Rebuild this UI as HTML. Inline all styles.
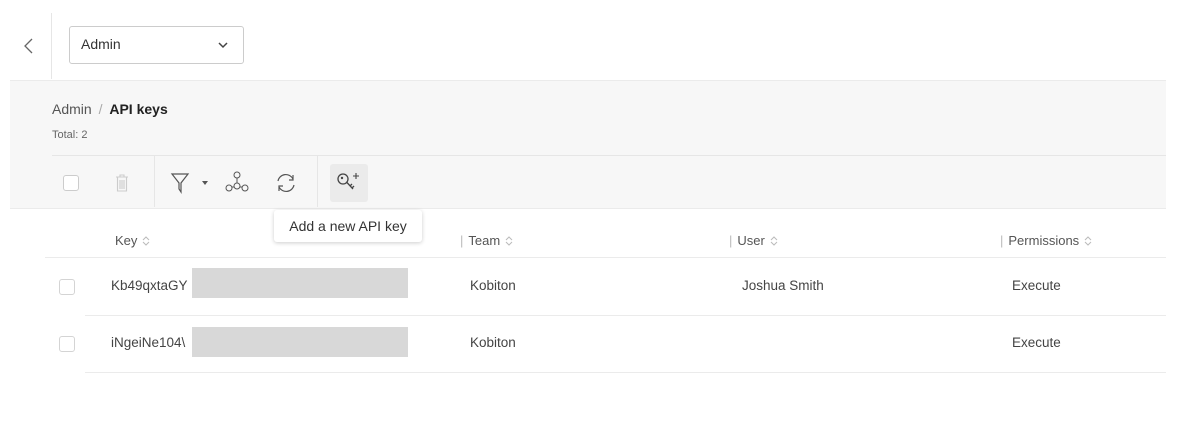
<!DOCTYPE html>
<html><head><style>
body{margin:0;width:1181px;height:430px;background:#fff;font-family:"Liberation Sans",sans-serif;color:#333;position:relative;overflow:hidden}
.a{position:absolute}
.t{font-size:13.5px;color:#444}
.hd{font-size:13px;color:#555}
.sort{display:inline-block;width:8px;height:12px;vertical-align:-2px;margin-left:5px}
.cb{position:absolute;width:14px;height:14px;border:1px solid #d4d4d4;border-radius:3px;background:#fff}
</style></head><body>
<svg class="a" style="left:22px;top:36px" width="14" height="20"><path d="M10 3 L3 10 L10 17" stroke="#666" stroke-width="1.3" fill="none"/></svg>
<div class="a" style="left:51px;top:13px;width:1px;height:66px;background:#e6e6e6"></div>
<div class="a" style="left:69px;top:26px;width:173px;height:36px;border:1px solid #ccc;border-radius:3px;background:#fff"></div>
<div class="a t" style="left:81px;top:36px;font-size:14px;color:#333">Admin</div>
<svg class="a" style="left:217px;top:40px" width="12" height="10"><path d="M2 3 L6 7 L10 3" stroke="#444" stroke-width="1.5" fill="none"/></svg>
<div class="a" style="left:10px;top:80px;width:1156px;height:127px;background:#f7f7f7;border-top:1px solid #ebebeb;border-bottom:1px solid #ebebeb"></div>
<div class="a" style="left:52px;top:101px;font-size:14px;color:#555">Admin <span style="color:#aaa;margin:0 3px">/</span> <b style="color:#222">API keys</b></div>
<div class="a" style="left:52px;top:129px;font-size:11px;color:#666">Total: 2</div>
<div class="a" style="left:52px;top:155px;width:1114px;height:1px;background:#e6e6e6"></div>
<div class="a" style="left:154px;top:156px;width:1px;height:51px;background:#e6e6e6"></div>
<div class="a" style="left:317px;top:156px;width:1px;height:51px;background:#e6e6e6"></div>
<div class="cb" style="left:63px;top:175px;border-color:#ccc"></div>
<svg class="a" style="left:114px;top:172px" width="16" height="22"><path d="M2 5 H14 M6 5 V3 H10 V5 M3.5 5 V19 H12.5 V5 M6 8 V17 M8 8 V17 M10 8 V17" stroke="#ccc" stroke-width="1.1" fill="none"/></svg>
<svg class="a" style="left:170px;top:171px" width="40" height="24"><path d="M2 3 H18 L11 12 V21 L9 18 V12 Z" stroke="#555" stroke-width="1.2" fill="none"/><path d="M32 10 H38 L35 14Z" fill="#555"/></svg>
<svg class="a" style="left:224px;top:170px" width="26" height="24"><circle cx="13" cy="5" r="3" stroke="#555" fill="none"/><circle cx="13" cy="16" r="3" stroke="#555" fill="none"/><circle cx="5" cy="18" r="3" stroke="#555" fill="none"/><circle cx="21" cy="18" r="3" stroke="#555" fill="none"/><path d="M13 8 V13 M8 17 H10 M16 17 H18" stroke="#555"/></svg>
<svg class="a" style="left:274px;top:171px" width="24" height="24"><path d="M4 10 A8 8 0 0 1 19 8 M20 14 A8 8 0 0 1 5 16" stroke="#555" stroke-width="1.2" fill="none"/><path d="M19 4 V9 H15" stroke="#555" stroke-width="1.2" fill="none"/><path d="M5 20 V15 H9" stroke="#555" stroke-width="1.2" fill="none"/></svg>
<div class="a" style="left:330px;top:164px;width:38px;height:38px;background:#ebebeb;border-radius:3px"></div>
<svg class="a" style="left:334px;top:168px" width="30" height="30"><circle cx="9" cy="11" r="5" stroke="#444" stroke-width="1.3" fill="none"/><circle cx="8" cy="10" r="1.2" fill="#444"/><path d="M12.5 14 L19 21 M16 18 L18 16 M18 20 L20 18" stroke="#444" stroke-width="1.3"/><path d="M22 5 V11 M19 8 H25" stroke="#444" stroke-width="1.1"/></svg>
<div class="a" style="left:274px;top:210px;width:148px;height:32px;background:#fff;border-radius:3px;box-shadow:0 1px 4px rgba(0,0,0,.2);font-size:14px;color:#333;line-height:32px;text-align:center">Add a new API key</div>
<div class="a hd" style="left:115px;top:233px">Key<svg class="sort" viewBox="0 0 8 12"><path d="M1 5 L4 2 L7 5 M1 7 L4 10 L7 7" stroke="#bbb" fill="none"/></svg></div>
<div class="a hd" style="left:460px;top:233px"><span style="color:#bbb;margin-right:5px">|</span>Team<svg class="sort" viewBox="0 0 8 12"><path d="M1 5 L4 2 L7 5 M1 7 L4 10 L7 7" stroke="#bbb" fill="none"/></svg></div>
<div class="a hd" style="left:729px;top:233px"><span style="color:#bbb;margin-right:5px">|</span>User<svg class="sort" viewBox="0 0 8 12"><path d="M1 5 L4 2 L7 5 M1 7 L4 10 L7 7" stroke="#bbb" fill="none"/></svg></div>
<div class="a hd" style="left:1000px;top:233px"><span style="color:#bbb;margin-right:5px">|</span>Permissions<svg class="sort" viewBox="0 0 8 12"><path d="M1 5 L4 2 L7 5 M1 7 L4 10 L7 7" stroke="#bbb" fill="none"/></svg></div>
<div class="a" style="left:45px;top:257px;width:1121px;height:1px;background:#ebebeb"></div>
<div class="cb" style="left:59px;top:279px"></div>
<div class="a t" style="left:111px;top:278px">Kb49qxtaGY</div>
<div class="a" style="left:192px;top:268px;width:216px;height:30px;background:#d8d8d8"></div>
<div class="a t" style="left:470px;top:278px">Kobiton</div>
<div class="a t" style="left:742px;top:278px">Joshua Smith</div>
<div class="a t" style="left:1012px;top:278px">Execute</div>
<div class="a" style="left:85px;top:315px;width:1081px;height:1px;background:#ebebeb"></div>
<div class="cb" style="left:59px;top:336px"></div>
<div class="a t" style="left:111px;top:335px">iNgeiNe104\</div>
<div class="a" style="left:192px;top:327px;width:216px;height:30px;background:#d8d8d8"></div>
<div class="a t" style="left:470px;top:335px">Kobiton</div>
<div class="a t" style="left:1012px;top:335px">Execute</div>
<div class="a" style="left:85px;top:372px;width:1081px;height:1px;background:#ebebeb"></div>
</body></html>
